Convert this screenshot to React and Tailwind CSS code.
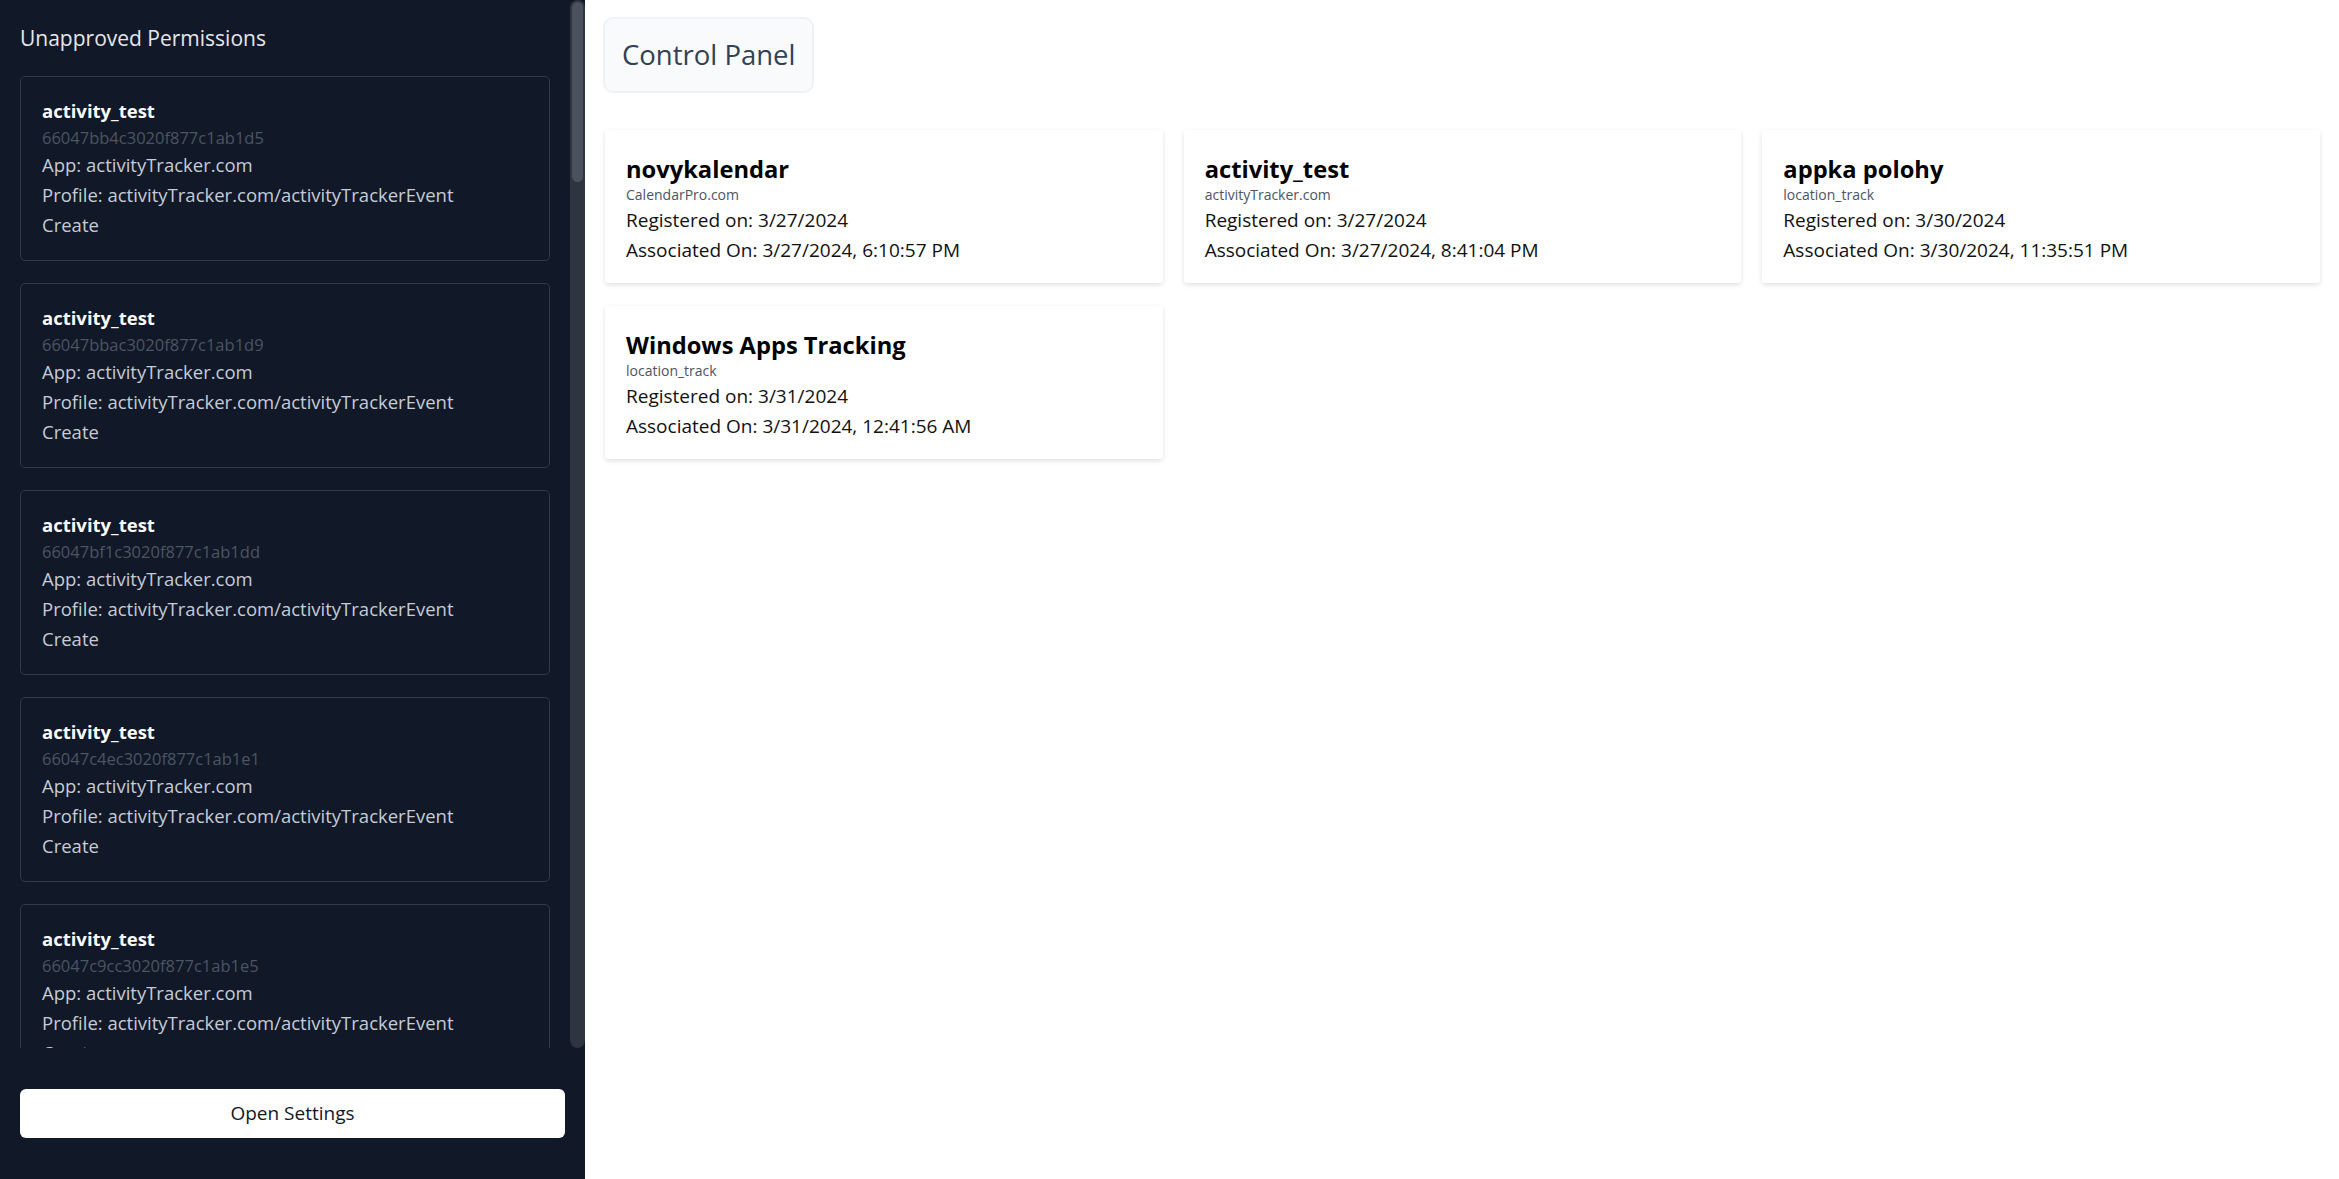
import React from "react";

const perms = [
  "66047bb4c3020f877c1ab1d5",
  "66047bbac3020f877c1ab1d9",
  "66047bf1c3020f877c1ab1dd",
  "66047c4ec3020f877c1ab1e1",
  "66047c9cc3020f877c1ab1e5",
];

const apps = [
  { name: "novykalendar", sub: "CalendarPro.com", reg: "3/27/2024", assoc: "3/27/2024, 6:10:57 PM" },
  { name: "activity_test", sub: "activityTracker.com", reg: "3/27/2024", assoc: "3/27/2024, 8:41:04 PM" },
  { name: "appka polohy", sub: "location_track", reg: "3/30/2024", assoc: "3/30/2024, 11:35:51 PM" },
  { name: "Windows Apps Tracking", sub: "location_track", reg: "3/31/2024", assoc: "3/31/2024, 12:41:56 AM" },
];

function PermCard({ id }) {
  return (
    <div className="shrink-0 rounded-[5px] border border-[#313a4a] px-[21px] pt-[19px] pb-[20px]">
      <div className="text-[18.5px] leading-[30px] font-bold text-[#f9fafb]">activity_test</div>
      <div className="text-[16.5px] leading-[24px] text-[#4b5563]">{id}</div>
      <div className="text-[18.5px] leading-[30px] text-[#c5ccd7]">App: activityTracker.com</div>
      <div className="text-[18.5px] leading-[30px] text-[#c5ccd7]">Profile: activityTracker.com/activityTrackerEvent</div>
      <div className="text-[18.5px] leading-[30px] text-[#c5ccd7]">Create</div>
    </div>
  );
}

function AppCard({ a }) {
  return (
    <div className="rounded-[3px] bg-white px-[21px] pt-[21px] pb-[18px] shadow-[0_2px_5px_rgba(0,0,0,0.12)]">
      <div className="text-[23.7px] leading-[36px] font-bold text-black">{a.name}</div>
      <div className="text-[14px] leading-[16px] text-[#4b5563]">{a.sub}</div>
      <div className="mt-[2px] text-[19px] leading-[30px] text-[#111111]">Registered on: {a.reg}</div>
      <div className="text-[19px] leading-[30px] text-[#111111]">Associated On: {a.assoc}</div>
    </div>
  );
}

export default function App() {
  return (
    <div className="flex h-[1179px] w-full overflow-hidden font-['Open_Sans',sans-serif]">
      <aside className="flex h-full w-[585px] shrink-0 flex-col bg-[#111827]">
        <div className="flex h-[1048px] shrink-0">
          <div className="flex-1 overflow-hidden px-[20px] pt-[22px]">
            <div className="mb-[22px] text-[21px] leading-[32px] text-[#e5e7eb]">Unapproved Permissions</div>
            <div className="flex flex-col gap-[22px]">
              {perms.map((id) => (
                <PermCard key={id} id={id} />
              ))}
            </div>
          </div>
          <div className="flex h-full w-[15px] shrink-0 justify-center rounded-full bg-[#2e3440] pt-[2px]">
            <div className="h-[180px] w-[11px] rounded-full bg-[#4b515e]" />
          </div>
        </div>
        <div className="px-[20px] pt-[41px]">
          <button className="h-[49px] w-full rounded-[6px] bg-white text-[19px] text-[#111827]">Open Settings</button>
        </div>
      </aside>
      <main className="flex-1 bg-white pt-[17px] pl-[18px] pr-[19px]">
        <div className="inline-flex rounded-[10px] border-2 border-[#eef2f6] bg-[#f8fafc] px-[17px] py-[15px] text-[27.5px] leading-[42px] text-[#334155]">
          Control Panel
        </div>
        <div className="mt-[37px] grid grid-cols-3 gap-x-[21px] gap-y-[23px] pl-[2px]">
          {apps.map((a) => (
            <AppCard key={a.name} a={a} />
          ))}
        </div>
      </main>
    </div>
  );
}
